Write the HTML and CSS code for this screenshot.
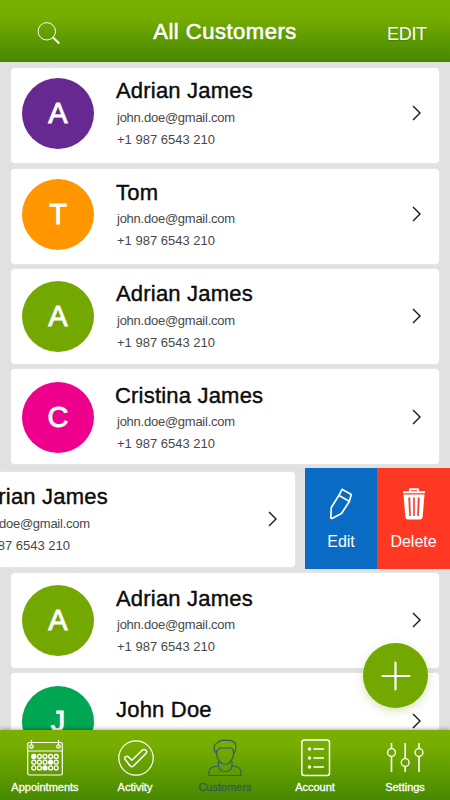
FILE: index.html
```html
<!DOCTYPE html>
<html lang="en">
<head>
<meta charset="utf-8">
<title>All Customers</title>
<link rel="stylesheet" href="styles.css">
</head>
<body>
<div class="app">
  <header class="topbar">
    <svg class="search" width="24" height="24" viewBox="0 0 24 24"><circle cx="9.8" cy="9.3" r="8.7" stroke-width="1"/><path d="M15.5 15L22.300 21.5" stroke-width="2"/></svg>
    <h1>All Customers</h1>
    <span class="edit-link">EDIT</span>
  </header>
  <main class="list">
    <article class="card c1">
      <div class="avatar purple">A</div>
      <div class="info"><h2>Adrian James</h2><p>john.doe@gmail.com</p><p class="phone">+1 987 6543 210</p></div>
      <svg class="chev" width="10" height="16" viewBox="0 0 10 16"><path d="M1 1L8 8L1 15"/></svg>
    </article>
    <article class="card c2">
      <div class="avatar orange">T</div>
      <div class="info"><h2 class="tom">Tom</h2><p>john.doe@gmail.com</p><p class="phone">+1 987 6543 210</p></div>
      <svg class="chev" width="10" height="16" viewBox="0 0 10 16"><path d="M1 1L8 8L1 15"/></svg>
    </article>
    <article class="card c3">
      <div class="avatar green">A</div>
      <div class="info"><h2>Adrian James</h2><p>john.doe@gmail.com</p><p class="phone">+1 987 6543 210</p></div>
      <svg class="chev" width="10" height="16" viewBox="0 0 10 16"><path d="M1 1L8 8L1 15"/></svg>
    </article>
    <article class="card c4">
      <div class="avatar pink">C</div>
      <div class="info"><h2 class="cristina">Cristina James</h2><p>john.doe@gmail.com</p><p class="phone">+1 987 6543 210</p></div>
      <svg class="chev" width="10" height="16" viewBox="0 0 10 16"><path d="M1 1L8 8L1 15"/></svg>
    </article>
    <div class="swiped">
      <article class="card c5">
        <div class="avatar green">A</div>
        <div class="info"><h2>Adrian James</h2><p>john.doe@gmail.com</p><p class="phone">+1 987 6543 210</p></div>
        <svg class="chev" width="10" height="16" viewBox="0 0 10 16"><path d="M1 1L8 8L1 15"/></svg>
      </article>
      <div class="action blue">
        <svg width="24" height="32" viewBox="0 0 24 32"><path d="M13 1.300L22.300 6.500L20.300 13.500L12.500 25.500L3.500 30.200Q1.800 31 1.800 29.200L2.300 19.500L10.300 6.800ZM10 7.500L19.800 13"/></svg>
        <span>Edit</span>
      </div>
      <div class="action red">
        <svg class="trash" width="24" height="32" viewBox="0 0 24 32"><path class="lid" d="M8 3.500V1.300H16V3.500M1 4.200H23"/><path class="can" fill-rule="evenodd" d="M1.500 6.500H22.500L20.700 28.500Q20.500 31.500 18 31.500H6Q3.500 31.500 3.300 28.500ZM6.300 9.500L7.200 28H8.800L8.200 9.500ZM11.200 9.500V28H12.800V9.500ZM15.800 9.500L15.200 28H16.800L17.700 9.500Z"/></svg>
        <span>Delete</span>
      </div>
    </div>
    <article class="card c6">
      <div class="avatar green">A</div>
      <div class="info"><h2>Adrian James</h2><p>john.doe@gmail.com</p><p class="phone">+1 987 6543 210</p></div>
      <svg class="chev" width="10" height="16" viewBox="0 0 10 16"><path d="M1 1L8 8L1 15"/></svg>
    </article>
    <article class="card c7">
      <div class="avatar emerald">J</div>
      <div class="info"><h2 class="john">John Doe</h2></div>
      <svg class="chev" width="10" height="16" viewBox="0 0 10 16"><path d="M1 1L8 8L1 15"/></svg>
    </article>
  </main>
  <button class="fab" aria-label="Add customer"><svg width="30" height="30" viewBox="0 0 30 30"><path d="M14.500 1.500V28.500M1.500 15H28.500"/></svg></button>
  <nav class="tabs">
    <a class="tab">
      <svg width="38" height="38" viewBox="0 0 38 38"><rect x="1.700" y="3.500" width="34.600" height="32.500" rx="1.500"/><path d="M2 12H36M5.500 1V6M32.500 1V6"/><g stroke-width="1.300"><circle cx="5.500" cy="7.500" r="1.700"/><circle cx="32.500" cy="7.500" r="1.700"/><circle cx="7.800" cy="17.500" r="2" fill="#fff"/><circle cx="13.400" cy="17.500" r="2"/><circle cx="19" cy="17.500" r="2"/><circle cx="24.600" cy="17.500" r="2"/><circle cx="30.200" cy="17.500" r="2"/><circle cx="7.800" cy="23.200" r="2"/><circle cx="13.400" cy="23.200" r="2"/><circle cx="19" cy="23.200" r="2"/><circle cx="24.600" cy="23.200" r="2" fill="#fff"/><circle cx="30.200" cy="23.200" r="2"/><circle cx="7.800" cy="28.900" r="2"/><circle cx="13.400" cy="28.900" r="2"/><circle cx="19" cy="28.900" r="2" fill="#fff"/><circle cx="24.600" cy="28.900" r="2"/><circle cx="30.200" cy="28.900" r="2"/></g></svg>
      <span>Appointments</span>
    </a>
    <a class="tab">
      <svg width="38" height="38" viewBox="0 0 38 38"><circle cx="20" cy="19" r="17.200"/><path d="M9.300 20.500Q7.800 18.600 9.600 17.600Q11.300 16.500 12.800 18.200L15.800 21.300L26.200 11.200Q28.200 9.600 30 11.300Q31.400 13 29.700 14.800L17.400 27Q15.700 28.500 14 26.800Z" stroke-width="1.500"/></svg>
      <span>Activity</span>
    </a>
    <a class="tab active">
      <svg width="38" height="38" viewBox="0 0 38 38"><path d="M10.700 14.500C8.500 13 8 10 8.300 7Q9 4.500 11.500 4Q13 1.300 17 1.300H23Q29.500 1.500 29.800 7C30 11 29.500 13 27.500 14.500M10.700 15V11.500Q13 11 13.300 9H25.500Q27.300 10 27.500 15C27.500 21 22.500 25.500 19 25.500S10.700 21 10.700 15ZM12.500 22V27Q3 27.500 3 33V36.500H35V33Q35 27.500 26 27V22M12.500 27Q13.500 32.500 19.200 32.500T26 27"/></svg>
      <span>Customers</span>
    </a>
    <a class="tab account">
      <svg width="38" height="38" viewBox="0 0 38 38"><rect x="5.800" y="1" width="27.700" height="35.500" rx="2.500" stroke-width="1.500"/><path d="M17.500 10H28M17.500 19H28M17.500 28H28" stroke-width="1.700"/><g fill="#fff" stroke="none"><circle cx="13.500" cy="10" r="1.700"/><circle cx="13.500" cy="19" r="1.700"/><circle cx="13.500" cy="28" r="1.700"/></g></svg>
      <span>Account</span>
    </a>
    <a class="tab">
      <svg width="38" height="38" viewBox="0 0 38 38"><path d="M5.500 4V9.500M5.500 17.500V33M19.200 4V19.500M19.200 27.500V33M33 4V9.500M33 17.500V33" stroke-width="1.600"/><g stroke-width="1.400"><circle cx="5.500" cy="13.500" r="3.900"/><circle cx="19.200" cy="23.500" r="3.900"/><circle cx="33" cy="13.500" r="3.900"/></g></svg>
      <span>Settings</span>
    </a>
  </nav>
</div>
</body>
</html>
```
FILE: styles.css
```css
* { box-sizing: border-box; margin: 0; padding: 0; }
body { font-family: "Liberation Sans", Arial, sans-serif; width: 450px; height: 800px; overflow: hidden; }
svg { display: block; fill: none; flex: none; }
.app { position: relative; width: 450px; height: 800px; display: flex; flex-direction: column; background: #e1e1e1; overflow: hidden; }
.topbar { height: 62px; flex: none; display: grid; grid-template-columns: 100px 250px 100px; background: linear-gradient(#79af00 0%, #75ac00 30%, #468800 100%); border-bottom: 1px solid #42820a; color: #fff; text-shadow: 0 1px 1px rgba(40, 80, 0, .35); }
.search { margin: 22px 0 0 37px; stroke: #fff; }
h1 { font-size: 22px; line-height: 26px; font-weight: 400; -webkit-text-stroke: .65px #fff; text-align: center; margin-top: 19px; letter-spacing: .5px; white-space: nowrap; }
.edit-link { font-size: 18px; line-height: 22px; margin: 23px 0 0 37px; letter-spacing: -.3px; }

.list { flex: 1; min-height: 0; overflow: hidden; padding-top: 6px; }
.card { display: flex; align-items: flex-start; width: 428px; height: 95px; margin: 0 0 5px 11px; padding: 10px 17px 0 11px; background: #fff; border-radius: 4px; flex: none; box-shadow: 0 0 3px rgba(255, 255, 255, .4); }
.c1 { margin-bottom: 6px; }
.c3 { padding-top: 12px; }
.c4 { padding-top: 13px; margin-bottom: 4px; }
.c6 { padding-top: 12px; }
.c7 { padding-top: 13px; }
.avatar { width: 72px; height: 71px; border-radius: 50%; color: #fff; font-size: 29px; line-height: 71px; text-align: center; -webkit-text-stroke: .9px #fff; flex: none; }
.purple { background: #662891; }
.orange { background: #ff9600; }
.green { background: #73a800; }
.pink { background: #ee008c; }
.emerald { background: #00a651; }
.info { flex: 1; padding-left: 22px; white-space: nowrap; }
h2 { font-size: 22px; line-height: 26px; font-weight: 400; letter-spacing: .2px; color: #0c0c0c; -webkit-text-stroke: .4px #0c0c0c; }
.c2 h2, .c4 h2, .c6 h2, .c7 h2 { padding-top: 1px; margin-bottom: -1px; }
.c2 .info p { position: relative; top: 0; }
.cristina { margin-left: -1px; }
.john { margin-top: 10px; }
.info p { font-size: 13px; line-height: 21px; color: #484848; margin: 3px 0 0 1px; letter-spacing: -.25px; }
.info .phone { margin-top: 1px; letter-spacing: 0; }
.chev { stroke: #151515; stroke-width: 1.4; margin: 27px 0 0; }
.swiped { display: flex; height: 101px; margin-bottom: 4px; overflow: hidden; }
.c5 { margin: 4px 10px 0 -133px; padding: 12px 17px 0 10px; }
.action { display: flex; flex-direction: column; align-items: center; width: 72px; flex: none; padding-top: 20px; color: #fff; font-size: 16px; line-height: 20px; }
.action svg { stroke: #fff; stroke-width: 1.700; stroke-linejoin: round; }
.action span { margin-top: 12px; }
.blue { background: #096bc3; }
.red { background: #ff3824; width: 73px; }
.action .can { fill: #fff; stroke: none; }
.action .lid { stroke-width: 2; }

.fab { position: absolute; left: 363px; top: 643px; width: 65px; height: 65px; border: 0; border-radius: 50%; background: #73a800; display: grid; place-items: center; box-shadow: 0 3px 10px rgba(115, 168, 0, .3); }
.fab svg { stroke: #fff; stroke-width: 2.200; stroke-linecap: round; }
.tabs { position: relative; height: 70px; flex: none; display: grid; grid-template-columns: repeat(5, 90px); background: linear-gradient(#7ab000 0%, #75ac00 25%, #478900 100%); box-shadow: 0 -1px 4px rgba(0, 0, 0, .3); }
.tab { display: flex; flex-direction: column; align-items: center; padding-top: 9px; color: #fff; font-size: 11px; line-height: 14px; -webkit-text-stroke: .3px currentColor; letter-spacing: 0; }
.tab svg { stroke: #fff; stroke-width: 1.200; }
.tab span { margin-top: 3px; }
.tab.active { color: #315c55; }
.tab.active svg { stroke: #315c6b; }
```
